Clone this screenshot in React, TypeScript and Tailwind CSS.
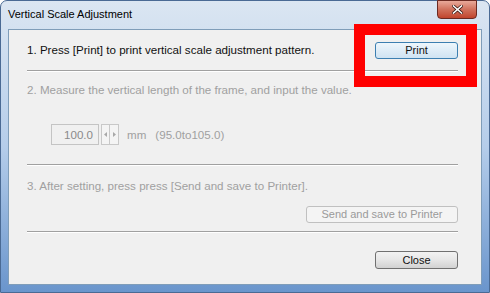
import React from "react";

const body = { fontFamily: "'Liberation Sans', Arial, sans-serif" };

function Sep() {
  return (
    <div className="flex flex-col">
      <div className="h-px bg-[#a0a0a0]" />
      <div className="h-px bg-white" />
    </div>
  );
}

export default function App() {
  return (
    <div className="w-[490px] h-[293px] overflow-hidden bg-white">
      <div className="relative w-[490px] h-[293px] flex flex-col rounded-t-[7px] border border-[#4a6a94] bg-gradient-to-b from-[#dbe6f2] via-[#b5cdea] to-[#6a95cc]">
        {/* title bar */}
        <div className="h-[28px] flex items-start justify-between pl-[7px] pr-[12px]">
          <div className="mt-[5px] text-[11px] text-black" style={body}>
            Vertical Scale Adjustment
          </div>
          <div className="w-[40px] h-[19px] -mt-px rounded-b-[4px] border border-[#6b2a22] bg-gradient-to-b from-[#e9a99a] via-[#d0715c] to-[#c0442c] flex items-center justify-center">
            <svg width="11" height="9" viewBox="0 0 11 9">
              <path d="M1.5 1 L9.5 8 M9.5 1 L1.5 8" stroke="#3a1a14" strokeWidth="3" strokeLinecap="square" />
              <path d="M1.5 1 L9.5 8 M9.5 1 L1.5 8" stroke="#ffffff" strokeWidth="1.6" strokeLinecap="square" />
            </svg>
          </div>
        </div>
        {/* client */}
        <div
          className="flex-1 mx-[7px] mb-[7px] border border-[#7f9db9] bg-[#f0f0f0] flex flex-col pl-[18px] pr-[23px] text-[11.6px]"
          style={body}
        >
          <div className="h-[40px] flex items-center justify-between">
            <span className="text-[#111]">1. Press [Print] to print vertical scale adjustment pattern.</span>
            <div className="w-[83px] h-[17px] rounded-[3px] border border-[#3c7fb1] bg-gradient-to-b from-[#eef6fc] to-[#cfe3f2] flex items-center justify-center text-[11px] text-[#111]">
              Print
            </div>
          </div>
          <Sep />
          <div className="h-[36px] flex items-center text-[#a0a0a0]">
            2. Measure the vertical length of the frame, and input the value.
          </div>
          <div className="h-[56px] flex items-start pt-[16px] pl-[24px] text-[#a0a0a0]">
            <div className="w-[48px] h-[21px] border border-[#c4c4c4] bg-[#f0f0f0] flex items-center justify-end pr-[5px] text-[#8a8a8a]">
              100.0
            </div>
            <div className="ml-[2px] h-[21px] flex">
              <div className="w-[9px] h-[21px] border border-[#c8c8c8] bg-[#f4f4f4] flex items-center justify-center">
                <svg width="3" height="5" viewBox="0 0 3 5"><path d="M3 0 L0 2.5 L3 5 Z" fill="#a8a8a8" /></svg>
              </div>
              <div className="w-[9px] h-[21px] border border-l-0 border-[#c8c8c8] bg-[#f4f4f4] flex items-center justify-center">
                <svg width="3" height="5" viewBox="0 0 3 5"><path d="M0 0 L3 2.5 L0 5 Z" fill="#a8a8a8" /></svg>
              </div>
            </div>
            <span className="ml-[8px] h-[21px] flex items-center">mm</span>
            <span className="ml-[9px] h-[21px] flex items-center">(95.0to105.0)</span>
          </div>
          <Sep />
          <div className="h-[40px] flex items-center text-[#a0a0a0]">
            3. After setting, press press [Send and save to Printer].
          </div>
          <div className="flex justify-end">
            <div className="w-[152px] h-[17px] rounded-[3px] border border-[#c0c0c0] bg-[#f4f4f4] flex items-center justify-center text-[11px] text-[#9a9a9a]">
              Send and save to Printer
            </div>
          </div>
          <div className="h-[8px]" />
          <Sep />
          <div className="h-[18px]" />
          <div className="flex justify-end">
            <div className="w-[83px] h-[18px] rounded-[3px] border border-[#707070] bg-gradient-to-b from-[#f2f2f2] via-[#e6e6e6] to-[#d2d2d2] flex items-center justify-center text-[11px] text-[#111]">
              Close
            </div>
          </div>
        </div>
        {/* red annotation */}
        <div className="absolute left-[353px] top-[23px] w-[123px] h-[63px] border-[11px] border-[#ff0000] pointer-events-none" />
      </div>
    </div>
  );
}
